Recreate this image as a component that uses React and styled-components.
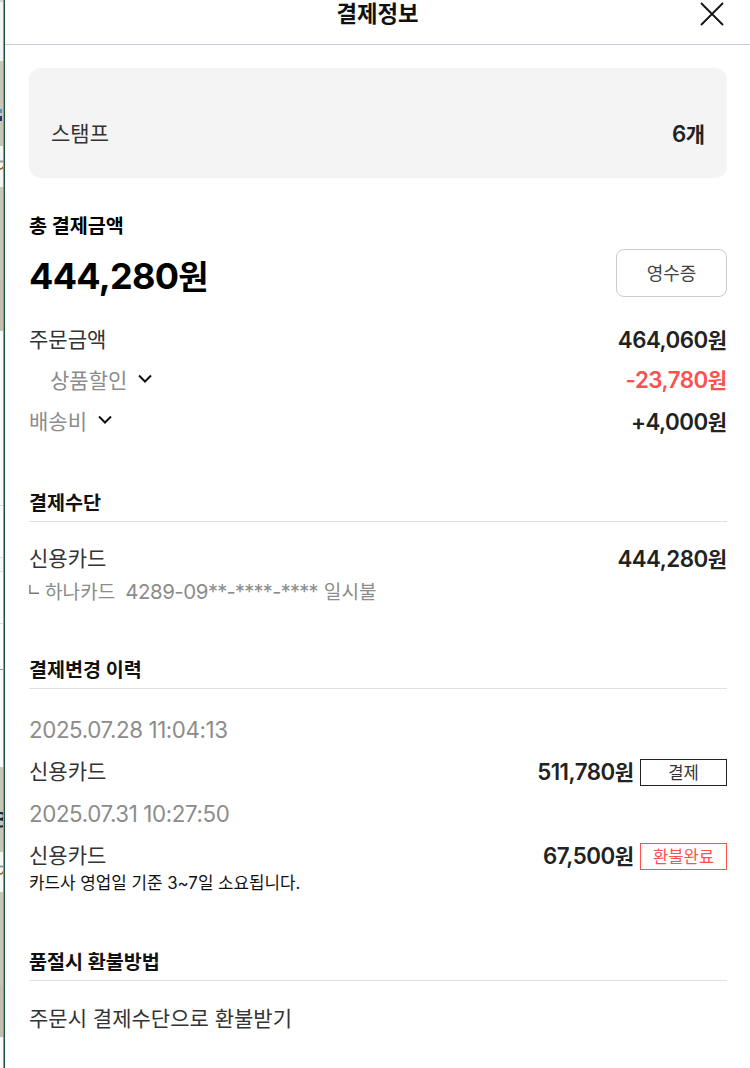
import React from 'react';
import styled, {createGlobalStyle} from "styled-components";

const history = [
    {date: '2025.07.28 11:04:13', method: '신용카드', amount: '511,780', status: '결제'},
    {date: '2025.07.31 10:27:50', method: '신용카드', amount: '67,500', status: '환불완료', refund: true},
];

const Price = ({value, unit = '원', red}) => (
    <PriceText $red={red}>{value}<Unit>{unit}</Unit></PriceText>
);

const Chevron = () => (
    <ChevronIcon width="14" height="10" viewBox="0 0 14 10" fill="none" stroke="#111" strokeWidth="2">
        <path d="M1 1.5 L7 7.5 L13 1.5"/>
    </ChevronIcon>
);

const App = () => {
    return (
        <Page>
            <GlobalStyle/>
            <Backdrop>
                <Block $h={2} $bg="#d5d5d5"/>
                <Block $h={59} $bg="#f4f5f6"/>
                <Block $h={85} $bg="#c9c6b7">
                    <svg width="4" height="85">
                        <rect x="0" y="48" width="2" height="4" fill="#4a9bc8"/>
                        <rect x="0" y="55" width="2" height="5" fill="#173d78"/>
                    </svg>
                </Block>
                <Block $h={41} $bg="#f4f5f5">
                    <svg width="4" height="41" fill="none">
                        <path d="M0 15.5 H4" stroke="#999" strokeWidth="2"/>
                        <path d="M0 23 Q3 23 4 19" stroke="#a65a24" strokeWidth="1.5"/>
                    </svg>
                </Block>
                <Block $h={93} $bg="#cac6b7"/>
                <Block $h={51} $bg="#c3beb1"/>
                <Block $h={175} $bg="#fafbfb" $line="#ddd"/>
                <Block $h={52} $bg="#fff" $line="#ddd"/>
                <Block $h={14} $bg="#fafafa" $line="#ddd"/>
                <Block $h={52} $bg="#fff" $line="#ddd"/>
                <Block $h={46} $bg="#fff" $line="#999"/>
                <Block $h={97} $bg="#fafbfc"/>
                <Block $h={85} $bg="#c9c6b7">
                    <svg width="4" height="85" fill="none" stroke="#14263d" strokeWidth="2">
                        <circle cx="1" cy="49" r="3"/>
                        <circle cx="1" cy="56" r="3.6"/>
                    </svg>
                </Block>
                <Block $h={40} $bg="#f6f8f8">
                    <svg width="4" height="40" fill="none">
                        <path d="M0 14.5 H4" stroke="#999" strokeWidth="2"/>
                        <path d="M0 22 Q3 22 4 18" stroke="#a65a24" strokeWidth="1.5"/>
                    </svg>
                </Block>
                <Block $h={93} $bg="#cac6b7"/>
                <Block $h={52} $bg="#c3beb1"/>
                <Block $h={31} $bg="#fafbfb"/>
            </Backdrop>
            <Panel>
                <Header>
                    <HeaderTitle>결제정보</HeaderTitle>
                    <CloseButton>
                        <svg width="24" height="24" viewBox="0 0 24 24" stroke="#111" strokeWidth="1.8">
                            <path d="M1 1 L23 23 M23 1 L1 23"/>
                        </svg>
                    </CloseButton>
                </Header>
                <Content>
                    <StampBox>
                        <Label>스탬프</Label>
                        <Price value="6" unit="개"/>
                    </StampBox>

                    <TotalTitle>총 결제금액</TotalTitle>
                    <TotalRow>
                        <TotalPrice>444,280<span>원</span></TotalPrice>
                        <ReceiptButton>영수증</ReceiptButton>
                    </TotalRow>

                    <Row $h={40}>
                        <Label>주문금액</Label>
                        <Price value="464,060"/>
                    </Row>
                    <Row $h={41}>
                        <Label $gray $indent>상품할인<Chevron/></Label>
                        <Price value="-23,780" red/>
                    </Row>
                    <Row $h={42}>
                        <Label $gray>배송비<Chevron/></Label>
                        <Price value="+4,000"/>
                    </Row>

                    <SectionTitle $top={43}>결제수단</SectionTitle>
                    <Row $h={36} $top={19}>
                        <Label>신용카드</Label>
                        <Price value="444,280"/>
                    </Row>
                    <CardInfo>
                        <BranchIcon width="10" height="10" viewBox="0 0 10 10" fill="none" stroke="#777" strokeWidth="1.4">
                            <path d="M0.9 0 V8.3 H10"/>
                        </BranchIcon>
                        <CardName>하나카드</CardName>
                        <CardNumber>4289-09<Mask>**-****-****</Mask></CardNumber>
                        <CardName>일시불</CardName>
                    </CardInfo>

                    <SectionTitle $top={47}>결제변경 이력</SectionTitle>
                    <History>
                        {history.map((item) => (
                            <React.Fragment key={item.date}>
                                <DateText>{item.date}</DateText>
                                <Row $h={42}>
                                    <Label>{item.method}</Label>
                                    <PriceGroup>
                                        <Price value={item.amount}/>
                                        <Status $refund={item.refund}>{item.status}</Status>
                                    </PriceGroup>
                                </Row>
                            </React.Fragment>
                        ))}
                    </History>
                    <Notice>카드사 영업일 기준 3~7일 소요됩니다.</Notice>

                    <SectionTitle $top={50}>품절시 환불방법</SectionTitle>
                    <Row $h={40} $top={18}>
                        <Label>주문시 결제수단으로 환불받기</Label>
                    </Row>
                </Content>
            </Panel>
        </Page>
    );
};

export default App;

const GlobalStyle = createGlobalStyle`
  * {
    box-sizing: border-box;
  }
  body {
    margin: 0;
    overflow: hidden;
    background: #fff;
    font-family: Inter, "Noto Sans CJK KR", sans-serif;
  }
  svg {
    display: block;
    flex: none;
  }
`;

const Page = styled.div`
  display: flex;
  width: 750px;
  height: 1068px;
  overflow: hidden;
`;

const Backdrop = styled.div`
  width: 3px;
  flex: none;
  overflow: hidden;
`;

const Block = styled.div`
  height: ${({$h}) => $h}px;
  overflow: hidden;
  background: ${({$bg}) => $bg};
  border-bottom: ${({$line}) => $line ? `1px solid ${$line}` : 'none'};
`;

const Panel = styled.div`
  flex: 1;
  border-left: 1px solid #8a9f92;
  background: #fff;
  box-shadow: inset 1px 0 #1f5440;
  padding-left: 1px;
`;

const Header = styled.div`
  display: flex;
  align-items: flex-start;
  justify-content: flex-end;
  height: 45px;
  padding-right: 26px;
  border-bottom: 1px solid #c9cdd5;
`;

const HeaderTitle = styled.h1`
  flex: 1;
  margin: 0 0 0 50px;
  text-align: center;
  font-size: 22.3px;
  line-height: 28px;
  font-weight: 700;
  color: #111;
`;

const CloseButton = styled.button`
  padding: 2px 0 0;
  border: none;
  background: none;
`;

const Content = styled.div`
  padding: 23px 23px 0 24px;
`;

const StampBox = styled.div`
  display: flex;
  align-items: center;
  justify-content: space-between;
  height: 110px;
  padding: 22px 22px 0;
  border-radius: 12px;
  background: #f4f4f4;
`;

const Label = styled.span`
  display: flex;
  align-items: center;
  gap: 11px;
  padding-left: ${({$indent}) => $indent ? 21 : 0}px;
  font-size: 21px;
  line-height: 28px;
  color: ${({$gray}) => $gray ? '#8c8c8c' : '#333'};
`;

const ChevronIcon = styled.svg`
  margin-bottom: 4px;
`;

const PriceText = styled.span`
  font-size: 22.3px;
  line-height: 28px;
  font-weight: 600;
  letter-spacing: -0.5px;
  color: ${({$red}) => $red ? '#ff5050' : '#222'};
`;

const Unit = styled.span`
  font-size: 21px;
  letter-spacing: 0;
`;

const TotalTitle = styled.h2`
  margin: 34px 0 0;
  font-size: 19.6px;
  line-height: 28px;
  font-weight: 700;
  color: #000;
`;

const TotalRow = styled.div`
  display: flex;
  align-items: center;
  justify-content: space-between;
  height: 48px;
  margin: 9px 0 23px;
`;

const TotalPrice = styled.strong`
  padding-top: 6px;
  font-size: 36px;
  line-height: 48px;
  font-weight: 700;
  letter-spacing: -0.7px;
  color: #000;
  span {
    font-size: 33px;
    letter-spacing: 0;
  }
`;

const ReceiptButton = styled.button`
  width: 111px;
  height: 48px;
  padding: 2px 0 0;
  border: 1px solid #ccc;
  border-radius: 8px;
  background: #fff;
  font: 400 18px/28px Inter, "Noto Sans CJK KR", sans-serif;
  color: #444;
`;

const Row = styled.div`
  display: flex;
  align-items: center;
  justify-content: space-between;
  height: ${({$h}) => $h}px;
  margin-top: ${({$top = 0}) => $top}px;
`;

const SectionTitle = styled.h2`
  height: 36px;
  margin: ${({$top}) => $top}px 0 0;
  border-bottom: 1px solid #e0e0e0;
  font-size: 19.6px;
  line-height: 35px;
  font-weight: 700;
  color: #111;
`;

const CardInfo = styled.div`
  display: flex;
  align-items: center;
  height: 29px;
  color: #8c8c8c;
`;

const BranchIcon = styled.svg`
  margin-bottom: 4px;
`;

const CardName = styled.span`
  margin-left: 6px;
  font-size: 19.1px;
  line-height: 28px;
`;

const CardNumber = styled.span`
  margin-left: 10px;
  font-size: 20.4px;
  line-height: 28px;
  letter-spacing: -0.45px;
`;

const Mask = styled.span`
  font-size: 20px;
  letter-spacing: -0.72px;
`;

const History = styled.div`
  padding-top: 20px;
`;

const DateText = styled.div`
  font-size: 22.3px;
  line-height: 42px;
  letter-spacing: -0.38px;
  color: #8c8c8c;
`;

const PriceGroup = styled.div`
  display: flex;
  align-items: center;
  gap: 6px;
`;

const Status = styled.span`
  width: 87px;
  height: 27px;
  border: 1px solid ${({$refund}) => $refund ? '#ff5050' : '#222'};
  text-align: center;
  font-size: 16.6px;
  line-height: 27px;
  color: ${({$refund}) => $refund ? '#ff5050' : '#333'};
`;

const Notice = styled.p`
  margin: -6px 0 0;
  font-size: 16.85px;
  line-height: 24px;
  color: #111;
`;
